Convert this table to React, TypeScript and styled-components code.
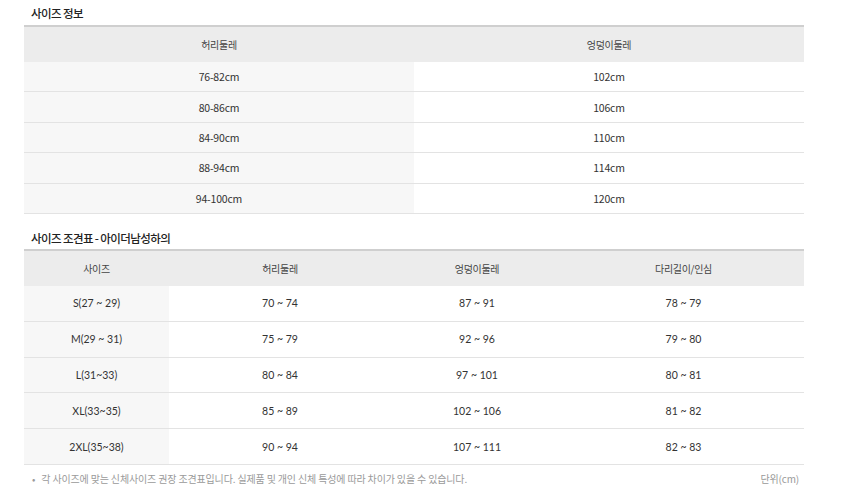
import React from "react";
import styled, { createGlobalStyle } from "styled-components";

const Global = createGlobalStyle`
  html, body { margin: 0; padding: 0; background: #fff; }
  body { font-family: "Noto Sans CJK KR", "Noto Sans", sans-serif; color: #333; }
`;

const Page = styled.div`
  width: 780px;
  padding: 0 0 0 24px;
  display: flex;
  flex-direction: column;
`;

const Title = styled.h3<{ $top: number; $h: number }>`
  margin: 0;
  padding: ${(p) => p.$top}px 0 0 7px;
  height: ${(p) => p.$h}px;
  box-sizing: border-box;
  font-size: 11.5px;
  line-height: 14px;
  font-weight: 500;
  letter-spacing: -0.6px;
  color: #222;
`;

const Grid = styled.div<{ $cols: string; $head: number; $row: number }>`
  display: grid;
  grid-template-columns: ${(p) => p.$cols};
  grid-auto-rows: ${(p) => p.$row}px;
  grid-template-rows: ${(p) => p.$head}px;
  border-top: 2px solid #cfcfcf;
`;

const Head = styled.div`
  background: #ececec;
  display: flex;
  align-items: center;
  justify-content: center;
  font-size: 10px;
  color: #444;
  letter-spacing: -0.3px;
`;

const Cell = styled.div<{ $shade?: boolean; $num?: boolean }>`
  display: flex;
  align-items: center;
  justify-content: center;
  background: ${(p) => (p.$shade ? "#f7f7f7" : "#fff")};
  border-bottom: 1px solid #e3e3e3;
  box-sizing: border-box;
  font-family: ${(p) =>
    p.$num ? "Lato, 'Noto Sans CJK KR', sans-serif" : "'Noto Sans CJK KR', 'Noto Sans', sans-serif"};
  font-size: ${(p) => (p.$num ? "10.5px" : "10.5px")};
  color: #333;
  letter-spacing: ${(p) => (p.$num ? "0" : "-0.2px")};
`;

const Footer = styled.div`
  display: flex;
  justify-content: space-between;
  align-items: center;
  height: 28px;
  padding: 0 5px 0 8px;
  font-size: 10px;
  color: #9a9a9a;
  letter-spacing: -0.15px;
`;

const Bullet = styled.span`
  margin-right: 6px;
`;

const Unit = styled.span`
  font-size: 10px;
  color: #999;
`;

const info = [
  ["76-82cm", "102cm"],
  ["80-86cm", "106cm"],
  ["84-90cm", "110cm"],
  ["88-94cm", "114cm"],
  ["94-100cm", "120cm"],
];

const chart = [
  ["S(27 ~ 29)", "70 ~ 74", "87 ~ 91", "78 ~ 79"],
  ["M(29 ~ 31)", "75 ~ 79", "92 ~ 96", "79 ~ 80"],
  ["L(31~33)", "80 ~ 84", "97 ~ 101", "80 ~ 81"],
  ["XL(33~35)", "85 ~ 89", "102 ~ 106", "81 ~ 82"],
  ["2XL(35~38)", "90 ~ 94", "107 ~ 111", "82 ~ 83"],
];

export default function App() {
  return (
    <Page>
      <Global />
      <Title $top={6} $h={25}>사이즈 정보</Title>
      <Grid $cols="390px 390px" $head={35} $row={30.4}>
        <Head>허리둘레</Head>
        <Head>엉덩이둘레</Head>
        {info.map((r, i) => (
          <React.Fragment key={i}>
            <Cell $shade>{r[0]}</Cell>
            <Cell>{r[1]}</Cell>
          </React.Fragment>
        ))}
      </Grid>
      <Title $top={17} $h={35}>사이즈 조견표 - 아이더남성하의</Title>
      <Grid $cols="145px 222px 172px 241px" $head={35} $row={35.8}>
        <Head>사이즈</Head>
        <Head>허리둘레</Head>
        <Head>엉덩이둘레</Head>
        <Head>다리길이/인심</Head>
        {chart.map((r, i) => (
          <React.Fragment key={i}>
            <Cell $shade $num>{r[0]}</Cell>
            <Cell $num>{r[1]}</Cell>
            <Cell $num>{r[2]}</Cell>
            <Cell $num>{r[3]}</Cell>
          </React.Fragment>
        ))}
      </Grid>
      <Footer>
        <span>
          <Bullet>•</Bullet>각 사이즈에 맞는 신체사이즈 권장 조견표입니다. 실제품 및 개인 신체 특성에 따라 차이가 있을 수 있습니다.
        </span>
        <Unit>단위(cm)</Unit>
      </Footer>
    </Page>
  );
}
